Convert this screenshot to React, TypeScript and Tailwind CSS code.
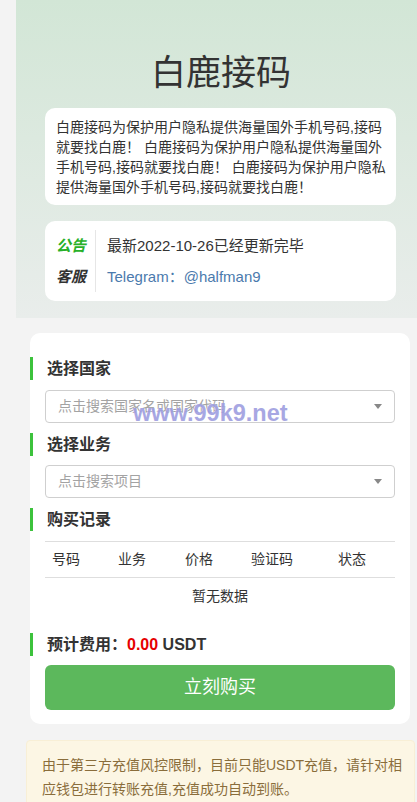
import React from "react";

const font = {
  fontFamily:
    '"Liberation Sans", Arial, "Noto Sans CJK SC", "Microsoft YaHei", sans-serif',
};

const SectionTitle = ({ children }: { children: React.ReactNode }) => (
  <div className="border-l-[3px] border-[#3cc23c] pl-[14px] h-[23px] leading-[23px] text-[16px] font-bold text-[#333]">
    {children}
  </div>
);

const SelectBox = ({ placeholder }: { placeholder: string }) => (
  <div className="mx-[15px] h-[33px] border border-[#cfcfcf] rounded-[4px] flex items-center justify-between pl-[12px] pr-[12px]">
    <span className="text-[14px] text-[#a3a3a3]">{placeholder}</span>
    <span className="w-0 h-0 border-l-[4px] border-r-[4px] border-t-[5px] border-l-transparent border-r-transparent border-t-[#888]" />
  </div>
);

export default function App() {
  const intro =
    "白鹿接码为保护用户隐私提供海量国外手机号码,接码就要找白鹿！ 白鹿接码为保护用户隐私提供海量国外手机号码,接码就要找白鹿！ 白鹿接码为保护用户隐私提供海量国外手机号码,接码就要找白鹿！";

  return (
    <div className="relative min-h-screen bg-[#f3f3f3] pl-[16px]" style={font}>
      {/* header */}
      <div className="h-[318px] bg-linear-to-b from-[#d2e6d6] to-[#e9edeb] pt-[51px]">
        <h1 className="text-center text-[35px] leading-[44px] text-[#333] font-normal pl-[9px]">
          白鹿接码
        </h1>
        <div className="mt-[13px] mx-[29px] mr-[21px] bg-white rounded-[10px] pl-[11px] pr-[8px] pt-[9px] pb-[8px] text-[14px] leading-[20px] text-[#333]">
          {intro}
        </div>
        <div className="mt-[16px] mx-[29px] mr-[21px] bg-white rounded-[10px] py-[9px] pl-[11px] flex">
          <div className="border-r border-[#e6e6e6] pr-[9px] text-[15px] font-bold italic">
            <div className="h-[31px] leading-[31px] text-[#28b028]">公告</div>
            <div className="h-[31px] leading-[31px] text-[#333]">客服</div>
          </div>
          <div className="pl-[11px] text-[15px]">
            <div className="h-[31px] leading-[31px] text-[#333]">
              最新2022-10-26已经更新完毕
            </div>
            <div className="h-[31px] leading-[31px] text-[#4b7aad]">
              Telegram：@halfman9
            </div>
          </div>
        </div>
      </div>

      {/* main card */}
      <div className="mt-[15px] ml-[14px] mr-[7px] bg-white rounded-[10px] pt-[24px] pb-[14px]">
        <SectionTitle>选择国家</SectionTitle>
        <div className="mt-[10px]">
          <SelectBox placeholder="点击搜索国家名或国家代码" />
        </div>
        <div className="mt-[10px]">
          <SectionTitle>选择业务</SectionTitle>
        </div>
        <div className="mt-[9px]">
          <SelectBox placeholder="点击搜索项目" />
        </div>
        <div className="mt-[10px]">
          <SectionTitle>购买记录</SectionTitle>
        </div>
        <div className="mt-[10px] mx-[15px] border-t border-[#dedede] text-[14px] text-[#333]">
          <div className="grid grid-cols-[66px_67px_66px_87px_1fr] pl-[7px] h-[36px] items-center border-b border-[#dedede]">
            <span>号码</span>
            <span>业务</span>
            <span>价格</span>
            <span>验证码</span>
            <span>状态</span>
          </div>
          <div className="h-[36px] leading-[36px] text-center">暂无数据</div>
        </div>
        <div className="mt-[19px]">
          <SectionTitle>
            预计费用：<span className="text-[#e60000]">0.00</span> USDT
          </SectionTitle>
        </div>
        <button className="mt-[9px] mx-[15px] w-[calc(100%-30px)] h-[45px] bg-[#5cb85c] rounded-[6px] text-white text-[18px]">
          立刻购买
        </button>
      </div>

      {/* notice */}
      <div className="mt-[16px] ml-[10px] mr-[2px] bg-[#fcf6e4] border border-[#f8efd6] rounded-[4px] pt-[12px] pb-[40px] pl-[15px] pr-[6px] text-[14px] leading-[24px] text-[#8a6d3b]">
        由于第三方充值风控限制，目前只能USDT充值，请针对相应钱包进行转账充值,充值成功自动到账。
      </div>

      {/* watermark */}
      <div
        className="absolute left-[133px] top-[399px] text-[23.5px] font-bold leading-[28px] text-[#9e9ee0] opacity-90 pointer-events-none"
        style={{ textShadow: "0 0 1px #fff" }}
      >
        www.99k9.net
      </div>
    </div>
  );
}
